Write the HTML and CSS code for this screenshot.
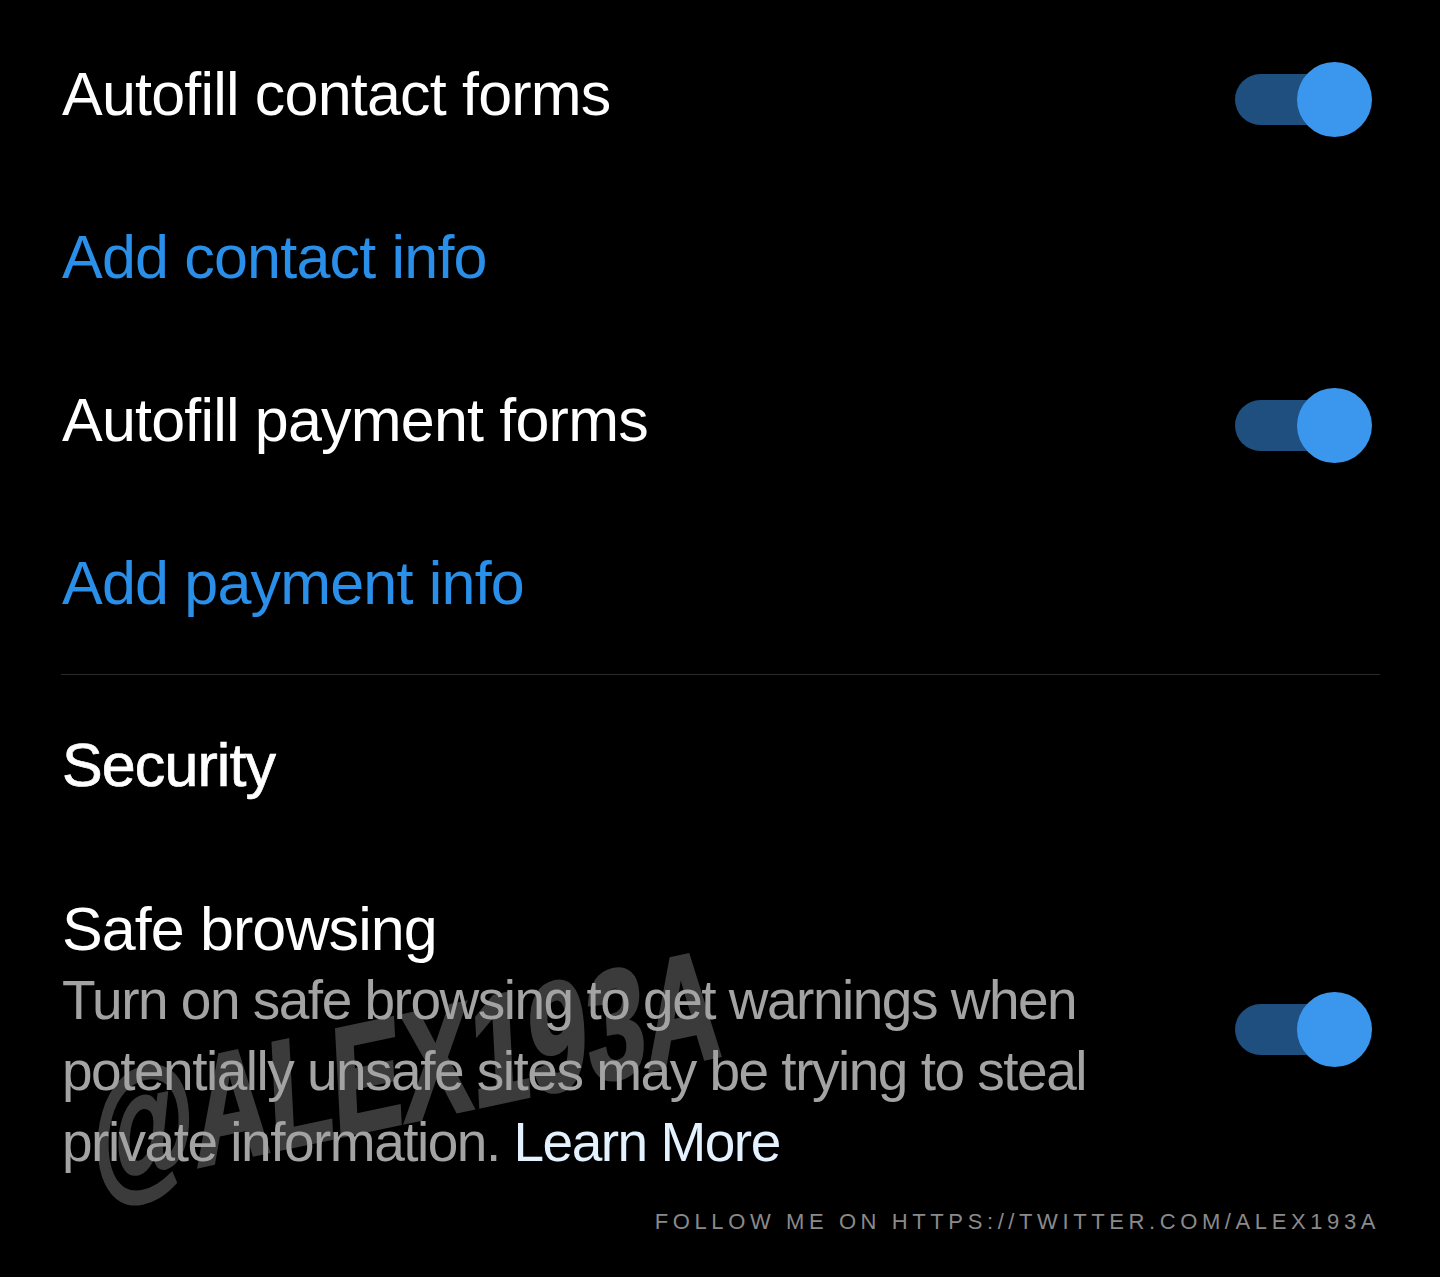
FILE: index.html
```html
<!DOCTYPE html>
<html lang="en">
<head>
<meta charset="utf-8">
<title>Settings</title>
<link rel="stylesheet" href="styles.css">
</head>
<body>
<div class="screen">
  <div class="watermark">@ALEX193A</div>
  <div class="content">
    <div class="row">
      <div class="title">Autofill contact forms</div>
      <div class="toggle"><span class="track"></span><span class="knob"></span></div>
    </div>
    <div class="row">
      <div class="title link">Add contact info</div>
    </div>
    <div class="row">
      <div class="title">Autofill payment forms</div>
      <div class="toggle"><span class="track"></span><span class="knob"></span></div>
    </div>
    <div class="row">
      <div class="title link">Add payment info</div>
    </div>
    <div class="divider"></div>
    <div class="section-head">Security</div>
    <div class="row-multi">
      <div class="text-block">
        <div class="item-title">Safe browsing</div>
        <div class="desc">Turn on safe browsing to get warnings when potentially unsafe sites may be trying to steal private information. <span class="learn">Learn More</span></div>
      </div>
      <div class="toggle toggle-low"><span class="track"></span><span class="knob"></span></div>
    </div>
    <div class="footer">FOLLOW ME ON HTTPS://TWITTER.COM/ALEX193A</div>
  </div>
</div>
</body>
</html>
```

FILE: styles.css
```css
html, body {
  margin: 0;
  padding: 0;
  background: #000;
}

.screen {
  position: relative;
  width: 1440px;
  height: 1277px;
  overflow: hidden;
  background: #000;
  font-family: "Liberation Sans", Arial, sans-serif;
}

.watermark {
  position: absolute;
  left: 406px;
  top: 1068px;
  font-family: "Liberation Sans", Arial, sans-serif;
  font-weight: 700;
  font-size: 152px;
  line-height: 1;
  color: #3b3b3b;
  -webkit-text-stroke: 4px #3b3b3b;
  white-space: nowrap;
  transform: translate(-50%, -50%) rotate(-12deg) skewX(-9deg) scaleX(0.7);
  z-index: 0;
}

.content {
  position: relative;
  z-index: 1;
  padding: 18px 0 0 62px;
}

.row {
  display: flex;
  align-items: center;
  justify-content: space-between;
  height: 163px;
  padding-right: 68px;
}

.title {
  font-size: 61px;
  line-height: 72px;
  letter-spacing: -0.8px;
  color: #ffffff;
  padding-bottom: 12px;
  white-space: nowrap;
}

.title.link {
  color: #2a8fe9;
}

.toggle {
  position: relative;
  width: 137px;
  height: 75px;
  flex: none;
}

.track {
  position: absolute;
  left: 0;
  top: 12px;
  width: 110px;
  height: 51px;
  border-radius: 26px;
  background: #1e4f7e;
}

.knob {
  position: absolute;
  right: 0;
  top: 0;
  width: 75px;
  height: 75px;
  border-radius: 50%;
  background: #3b97ee;
}

.divider {
  height: 1px;
  background: #2a2a2a;
  margin: 4px 60px 0 -1px;
}

.section-head {
  margin-top: 54px;
  font-size: 61px;
  line-height: 72px;
  letter-spacing: -0.9px;
  color: #ffffff;
  -webkit-text-stroke: 0.7px #ffffff;
}

.row-multi {
  display: flex;
  align-items: center;
  justify-content: space-between;
  margin-top: 92px;
  padding-right: 68px;
}

.text-block {
  width: 1110px;
}

.item-title {
  font-size: 61px;
  line-height: 72px;
  letter-spacing: -0.9px;
  color: #ffffff;
}

.desc {
  font-size: 55px;
  line-height: 71px;
  letter-spacing: -1.5px;
  color: #a3a3a3;
}

.learn {
  color: #e4f1ff;
}

.toggle-low {
  margin-bottom: 12px;
}

.footer {
  margin-top: 31px;
  padding-right: 60px;
  text-align: right;
  font-size: 22px;
  line-height: 26px;
  letter-spacing: 4.6px;
  color: #8a8a8a;
  white-space: nowrap;
}
```
